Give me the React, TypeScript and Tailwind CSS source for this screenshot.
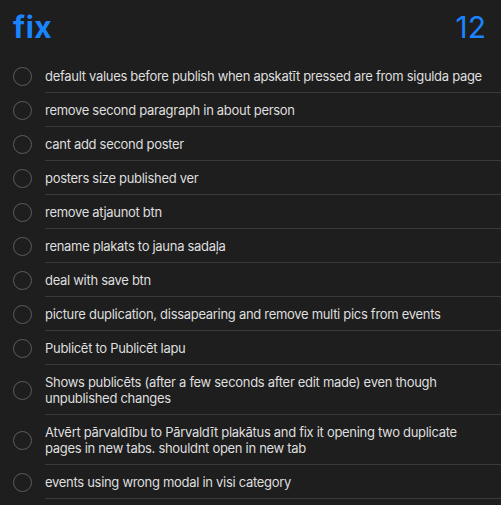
const items = [
  "default values before publish when apskatīt pressed are from sigulda page",
  "remove second paragraph in about person",
  "cant add second poster",
  "posters size published ver",
  "remove atjaunot btn",
  "rename plakats to jauna sadaļa",
  "deal with save btn",
  "picture duplication, dissapearing and remove multi pics from events",
  "Publicēt to Publicēt lapu",
  "Shows publicēts (after a few seconds after edit made) even though unpublished changes",
  "Atvērt pārvaldību to Pārvaldīt plakātus and fix it opening two duplicate pages in new tabs. shouldnt open in new tab",
  "events using wrong modal in visi category",
];

const App = () => {
  return (
    <div className="w-[501px] h-[505px] overflow-hidden bg-[#1e1e1e] font-['Inter',sans-serif]">
      <div className="flex items-end justify-between h-[59px] pl-[13px] pr-[15px] pb-[17px]">
        <h1 className="text-[30px] font-bold tracking-[0.5px] text-[#1a84ff] leading-none">fix</h1>
        <span className="text-[30px] text-[#1a84ff] leading-none">12</span>
      </div>
      <ul>
        {items.map((text) => (
          <li key={text} className="flex items-center">
            <div className="w-[45px] flex justify-center pr-[1px] shrink-0">
              <span className="w-[19px] h-[19px] rounded-full border border-[#5c5c5c]" />
            </div>
            <div className="flex-1 border-b border-[#3a3a3a] pt-[9px] pb-[8px] pr-[12px] flex items-center">
              <p className="text-[13px] leading-[16px] tracking-[-0.3px] text-[#dedede]">{text}</p>
            </div>
          </li>
        ))}
      </ul>
    </div>
  );
};

export default App;
